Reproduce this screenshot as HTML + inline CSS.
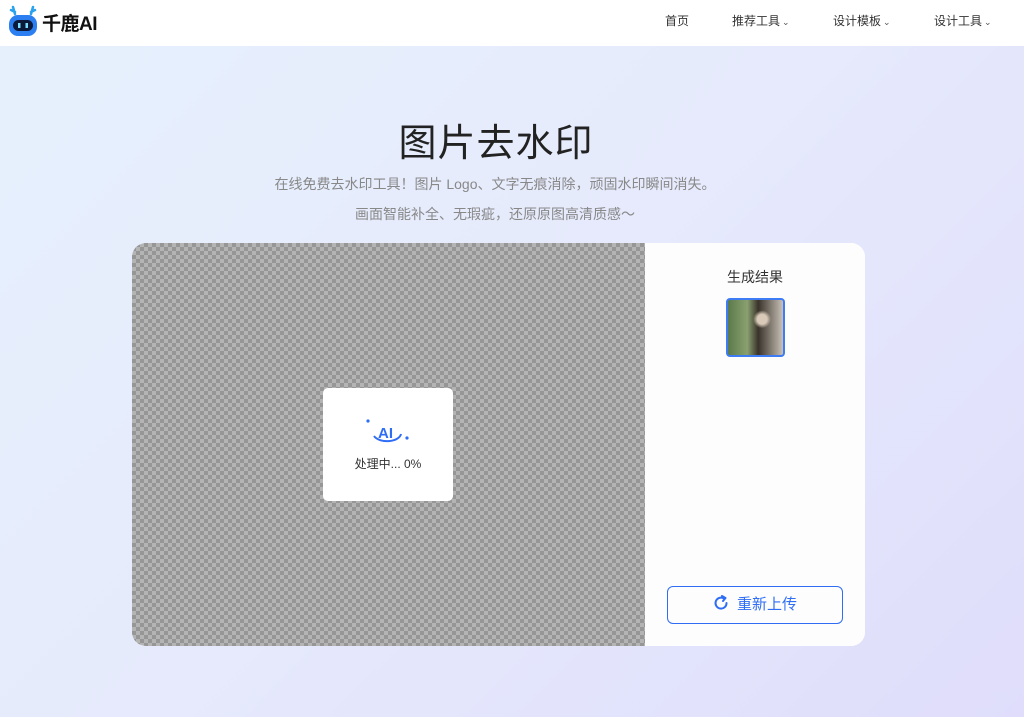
<!DOCTYPE html>
<html><head><meta charset="utf-8"><style>
*{margin:0;padding:0;box-sizing:border-box}
body{width:1024px;height:717px;overflow:hidden;font-family:"Liberation Sans","Noto Sans CJK SC",sans-serif;background:linear-gradient(135deg,#e6f1fd 0%,#e6eafc 50%,#dfddfb 100%);position:relative}
.hdr{position:absolute;left:0;top:0;width:1024px;height:46px;background:#fff}
.logo{position:absolute;left:8px;top:5px}
.brand{position:absolute;left:42px;top:9px;font-size:19px;font-weight:bold;color:#111;letter-spacing:-0.5px}
.nav{position:absolute;top:12px;font-size:12px;color:#333}
.chev{font-size:9px;color:#555;margin-left:2px}
h1{position:absolute;top:112px;left:0;width:992px;text-align:center;font-size:38px;font-weight:normal;color:#222;letter-spacing:1px}
.sub{position:absolute;left:0;width:990px;text-align:center;font-size:14px;color:#888}
.card{position:absolute;left:132px;top:243px;width:733px;height:403px;border-radius:14px;overflow:hidden;background:#fff}
.chk{position:absolute;left:0;top:0;width:513px;height:403px;background-color:#b4b4b4;background-image:linear-gradient(45deg,#969696 25%,transparent 25%,transparent 75%,#969696 75%),linear-gradient(45deg,#969696 25%,transparent 25%,transparent 75%,#969696 75%);background-size:8px 8px;background-position:0 0,4px 4px}
.prog{position:absolute;left:191px;top:145px;width:130px;height:113px;background:#fff;border-radius:5px;text-align:center}
.prog .t{position:absolute;top:67px;width:100%;font-size:12px;color:#333}
.right{position:absolute;left:513px;top:0;width:220px;height:403px;background:#fdfdfe}
.res{position:absolute;top:24px;width:100%;text-align:center;font-size:14px;color:#333}
.thumb{position:absolute;left:81px;top:55px;width:59px;height:59px;border:2px solid #3d7cf5;border-radius:4px;background:radial-gradient(circle at 62% 35%,#d9c9b8 0 10%,transparent 18%),linear-gradient(90deg,#5c7a4a 0%,#8aa070 35%,#3a332b 55%,#c9c2b8 100%)}
.btn{position:absolute;left:22px;top:343px;width:176px;height:38px;border:1px solid #2f6df5;border-radius:6px;color:#2f6df5;font-size:15px;text-align:center;line-height:36px}
</style></head><body>
<div class="hdr">
<svg class="logo" width="30" height="32" viewBox="0 0 30 32"><path d="M5 2 L7 9 M3 5 L7 7 M25 2 L23 9 M27 5 L23 7" stroke="#2aa3ee" stroke-width="2.5" stroke-linecap="round" fill="none"/><rect x="1" y="10" width="28" height="21" rx="9" fill="#2b7ff0"/><rect x="5" y="15" width="20" height="11" rx="5.5" fill="#0b1a3a"/><rect x="10" y="18" width="2.5" height="5" fill="#7df"/><rect x="17.5" y="18" width="2.5" height="5" fill="#7df"/></svg>
<div class="brand">千鹿AI</div>
<div class="nav" style="left:665px">首页</div>
<div class="nav" style="left:732px">推荐工具<span class="chev">⌄</span></div>
<div class="nav" style="left:833px">设计模板<span class="chev">⌄</span></div>
<div class="nav" style="left:934px">设计工具<span class="chev">⌄</span></div>
</div>
<h1>图片去水印</h1>
<div class="sub" style="top:174px">在线免费去水印工具！图片 Logo、文字无痕消除，顽固水印瞬间消失。</div>
<div class="sub" style="top:204px">画面智能补全、无瑕疵，还原原图高清质感～</div>
<div class="card">
<div class="chk"></div>
<div class="prog">
<svg style="position:absolute;left:42px;top:28px" width="46" height="30" viewBox="0 0 46 30"><circle cx="3" cy="5" r="1.6" fill="#2f6df5"/><circle cx="42" cy="22" r="1.6" fill="#2f6df5"/><path d="M9 20 A14 8 0 0 0 36 18" stroke="#2f6df5" stroke-width="2" fill="none"/><text x="13" y="22" font-family="Liberation Sans" font-weight="bold" font-size="15" fill="#2f6df5">AI</text></svg>
<div class="t">处理中... 0%</div>
</div>
<div class="right">
<div class="res">生成结果</div>
<div class="thumb"></div>
<div class="btn"><svg width="16" height="16" viewBox="0 0 16 16" style="vertical-align:-2px;margin-right:8px"><path d="M13.5 8 A5.5 5.5 0 1 1 10.5 3.2" stroke="#2f6df5" stroke-width="2" fill="none" stroke-linecap="round"/><path d="M9 1 L12.5 3 L10 6" stroke="#2f6df5" stroke-width="2" fill="none" stroke-linecap="round" stroke-linejoin="round"/></svg>重新上传</div>
</div>
</div>
</body></html>
